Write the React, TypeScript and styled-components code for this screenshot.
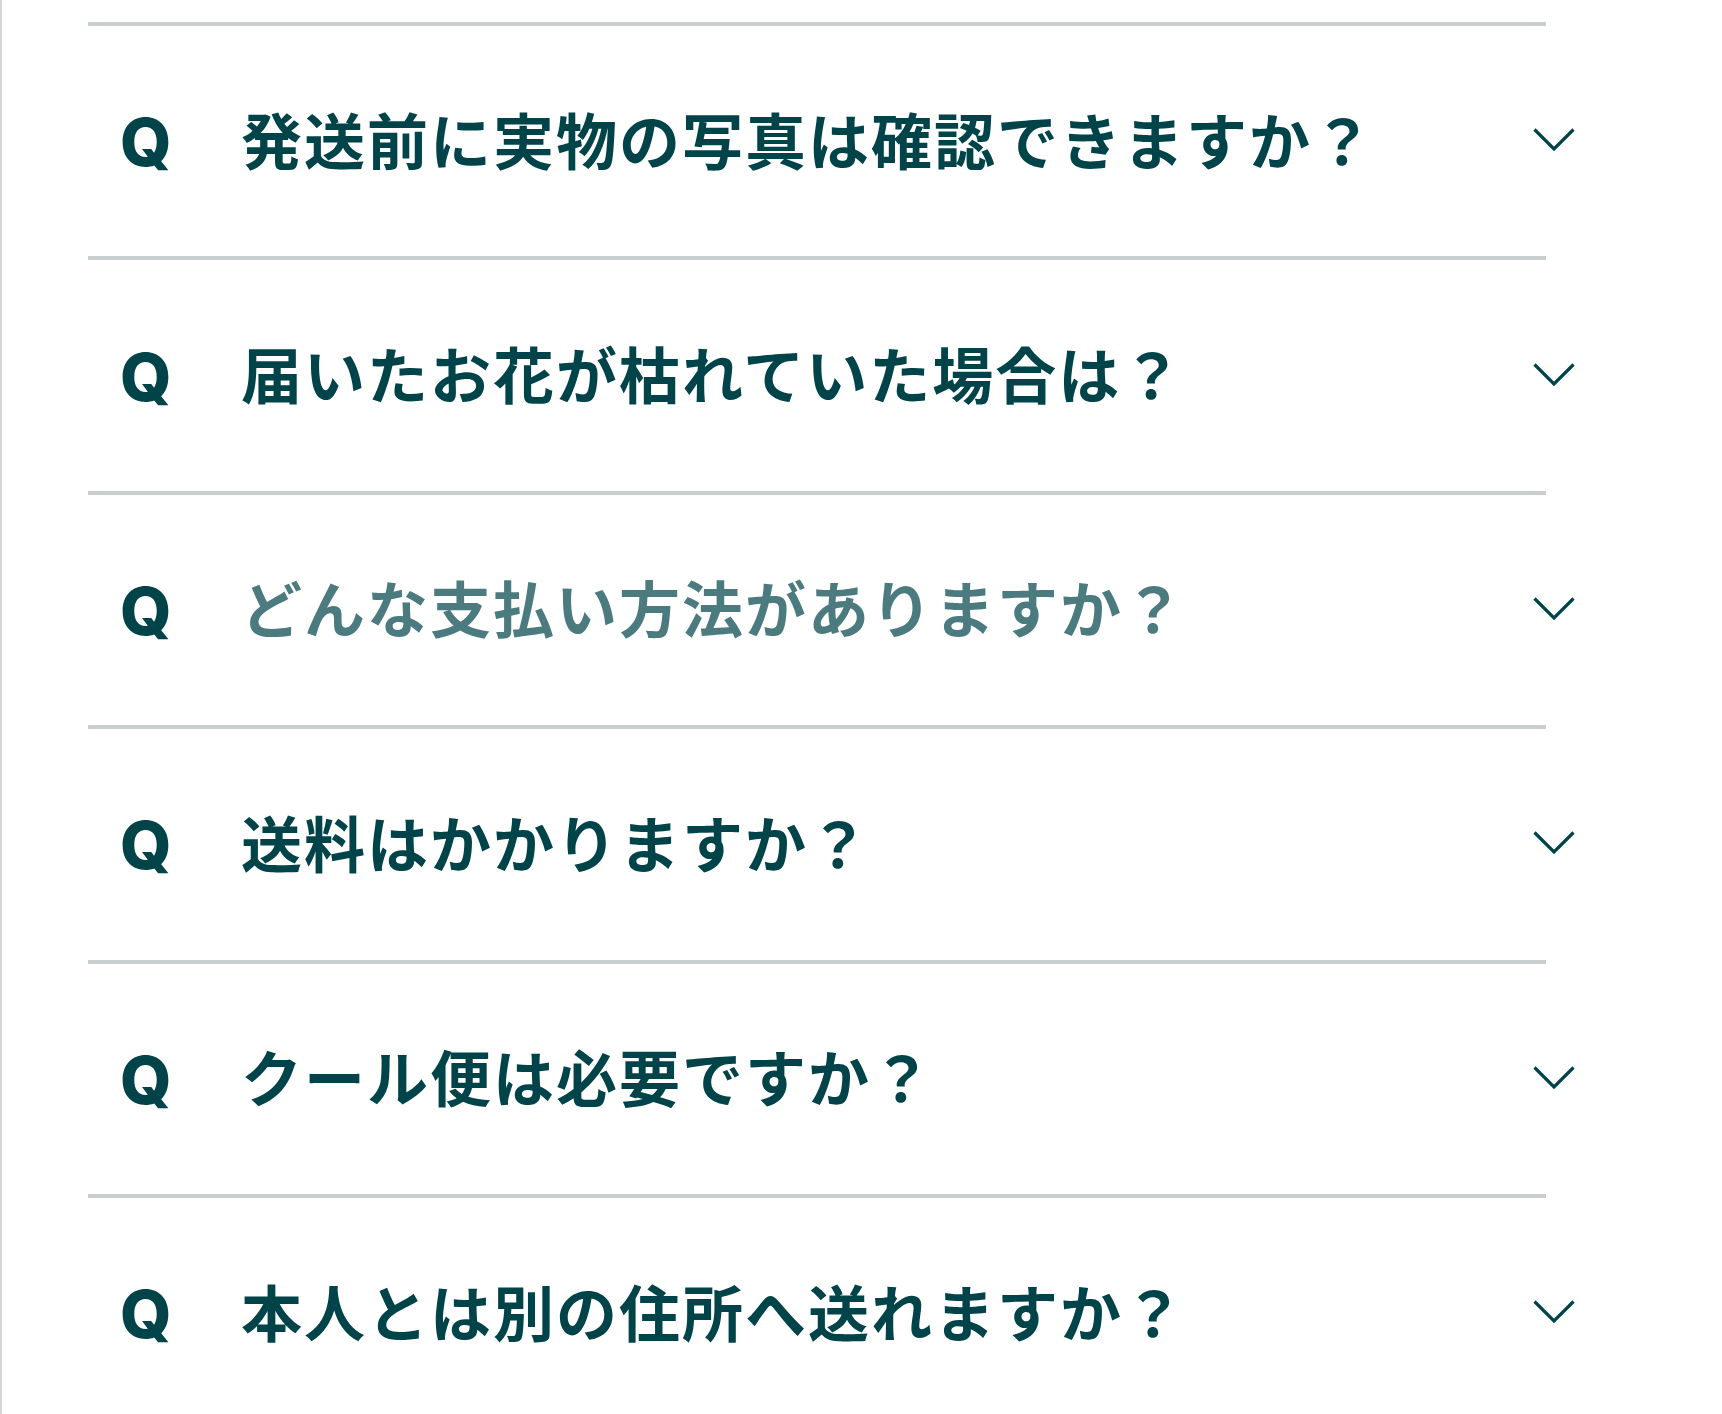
import { ReactElement } from 'react'
import styled, { createGlobalStyle } from 'styled-components'

const questions = [
  { text: '発送前に実物の写真は確認できますか？' },
  { text: '届いたお花が枯れていた場合は？' },
  { text: 'どんな支払い方法がありますか？', hover: true },
  { text: '送料はかかりますか？' },
  { text: 'クール便は必要ですか？' },
  { text: '本人とは別の住所へ送れますか？' },
]

function Chevron(): ReactElement {
  return (
    <ChevronIcon viewBox="0 0 42 24" aria-hidden="true">
      <polyline points="1.5,1.5 21,21 40.5,1.5" />
    </ChevronIcon>
  )
}

function App(): ReactElement {
  return (
    <>
      <GlobalStyle />
      <Page>
        <FaqList>
          {questions.map((q) => (
            <FaqItem key={q.text}>
              <QuestionRow>
                <QMark>Q</QMark>
                <QuestionText $hover={q.hover}>{q.text}</QuestionText>
                <Chevron />
              </QuestionRow>
            </FaqItem>
          ))}
        </FaqList>
      </Page>
    </>
  )
}

export default App

const GlobalStyle = createGlobalStyle`
  html, body {
    margin: 0;
    padding: 0;
    background: #ffffff;
  }
  body {
    font-family: "Noto Sans CJK JP", "Noto Sans", sans-serif;
    color: #00444a;
  }
`

const Page = styled.div`
  min-height: 1414px;
  border-left: 2px solid #d6d6d6;
  padding: 22px 0 0 86px;
  box-sizing: border-box;
  overflow: hidden;
`

const FaqList = styled.ul`
  list-style: none;
  margin: 0;
  padding: 0;
  width: 1458px;
`

const FaqItem = styled.li`
  border-top: 4px solid #c9cecf;
`

const QuestionRow = styled.div`
  display: flex;
  align-items: center;
  box-sizing: border-box;
  height: 230.4px;
  padding: 0 0 6px 32px;
  margin-right: -29px;
  cursor: pointer;
`

const QMark = styled.span`
  flex: 0 0 121px;
  margin-top: 8px;
  font-family: Inter, "DejaVu Sans", sans-serif;
  font-weight: 800;
  font-size: 66px;
  line-height: 1;
  color: #00444a;
`

const QuestionText = styled.span<{ $hover?: boolean }>`
  flex: 1;
  font-family: "Noto Sans CJK JP", "Noto Sans", sans-serif;
  font-weight: 700;
  font-size: 61px;
  letter-spacing: 2px;
  line-height: 1.2;
  color: #00444a;
  opacity: ${(p) => (p.$hover ? 0.7 : 1)};
`

const ChevronIcon = styled.svg`
  flex: 0 0 42px;
  width: 42px;
  height: 24px;
  margin-top: 4px;
  fill: none;
  stroke: #00444a;
  stroke-width: 3.2;
`
